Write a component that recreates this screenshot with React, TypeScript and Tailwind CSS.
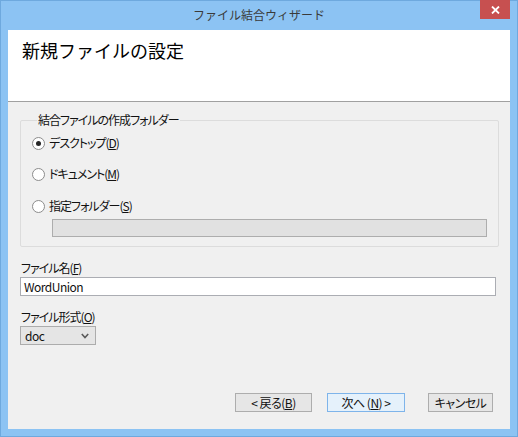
import React from "react";

const font = { fontFamily: '"Noto Sans CJK JP", "Noto Sans", sans-serif' };

function Radio({ checked, children }: { checked?: boolean; children: React.ReactNode }) {
    return (
        <div className="flex items-center h-[20px] gap-[4px]">
            <div className="w-[13px] h-[13px] rounded-full border border-[#8c8c8c] bg-white flex items-center justify-center">
                {checked && <div className="w-[5px] h-[5px] rounded-full bg-[#262626]" />}
            </div>
            <span className="text-[12px] leading-[16px] text-[#111]">{children}</span>
        </div>
    );
}

function Button({ primary, className, children }: { primary?: boolean; className?: string; children: React.ReactNode }) {
    return (
        <div
            className={
                "h-[19px] flex items-center justify-center text-[12px] leading-[16px] text-[#111] border tracking-[-0.5px] whitespace-pre " +
                (primary ? "border-[#7eb4ea] bg-[#e5f1fb] " : "border-[#adadad] bg-[#e6e6e6] ") +
                (className ?? "")
            }
        >
            {children}
        </div>
    );
}

export default function App() {
    return (
        <div style={font} className="w-[518px] h-[437px] bg-[#8cc3f3] border border-[#6ea9de] flex flex-col px-[7px] pb-[7px]">
            {/* title bar */}
            <div className="h-[29px] grid grid-cols-[1fr_auto_1fr] items-start">
                <div />
                <div className="pt-[6px] text-[12px] leading-[16px] text-[#3a3a3a]">ファイル結合ウィザード</div>
                <div className="flex justify-end">
                    <div className="w-[30px] h-[19px] -mt-[1px] bg-[#c75050] flex items-center justify-center">
                        <svg width="9" height="8" viewBox="0 0 9 8">
                            <path d="M1 0.5 L8 7.5 M8 0.5 L1 7.5" stroke="white" strokeWidth="1.8" />
                        </svg>
                    </div>
                </div>
            </div>

            <div className="flex-1 flex flex-col">
                {/* header */}
                <div className="h-[72px] bg-white border-b border-[#a0a0a0] pl-[14px] pt-[8px]">
                    <div className="text-[18px] leading-[24px] text-black">新規ファイルの設定</div>
                </div>

                {/* body */}
                <div className="flex-1 bg-[#f0f0f0] flex flex-col [font-feature-settings:'palt'] tracking-[-1px]">
                    <fieldset className="mt-[10px] ml-[12px] mr-[11px] border border-[#dcdcdc] rounded-[2px] pl-[11px] pr-[11px] pb-[9px]">
                        <legend className="ml-[5px] px-[1px] text-[12px] leading-[16px] text-[#111]">結合ファイルの作成フォルダー</legend>
                        <div className="flex flex-col">
                            <div className="mt-[5px]">
                                <Radio checked>デスクトップ(<u>D</u>)</Radio>
                            </div>
                            <div className="mt-[11px]">
                                <Radio>ドキュメント(<u>M</u>)</Radio>
                            </div>
                            <div className="mt-[12px]">
                                <Radio>指定フォルダー(<u>S</u>)</Radio>
                            </div>
                            <div className="mt-[3px] ml-[20px] h-[18px] border border-[#adadad] bg-[#e1e1e1]" />
                        </div>
                    </fieldset>

                    <div className="mt-[13px] ml-[13px] text-[12px] leading-[16px] text-[#111]">
                        ファイル名(<u>F</u>)
                    </div>
                    <div className="mt-[1px] ml-[12px] w-[476px] h-[19px] border border-[#abadb3] bg-white pl-[3px] flex items-center text-[12px] leading-[16px] text-[#111] tracking-[-0.5px]">
                        WordUnion
                    </div>

                    <div className="mt-[13px] ml-[13px] text-[12px] leading-[16px] text-[#111]">
                        ファイル形式(<u>O</u>)
                    </div>
                    <div className="mt-[1px] ml-[12px] w-[76px] h-[19px] border border-[#acacac] bg-[#e5e5e5] pl-[4px] pr-[6px] flex items-center justify-between text-[12px] leading-[16px] text-[#111] tracking-[-0.5px]">
                        <span>doc</span>
                        <svg width="8" height="6" viewBox="0 0 8 6">
                            <path d="M0.8 1 L4 4.5 L7.2 1" fill="none" stroke="#5a5a5a" strokeWidth="1.6" />
                        </svg>
                    </div>

                    <div className="mt-auto flex justify-end pr-[17px] pb-[17px]">
                        <Button className="w-[77px]">{"< 戻る("}<u>B</u>{")"}</Button>
                        <Button primary className="w-[78px] ml-[15px]">{"次へ ("}<u>N</u>{") >"}</Button>
                        <Button className="w-[65px] ml-[23px]">キャンセル</Button>
                    </div>
                </div>
            </div>
        </div>
    );
}
